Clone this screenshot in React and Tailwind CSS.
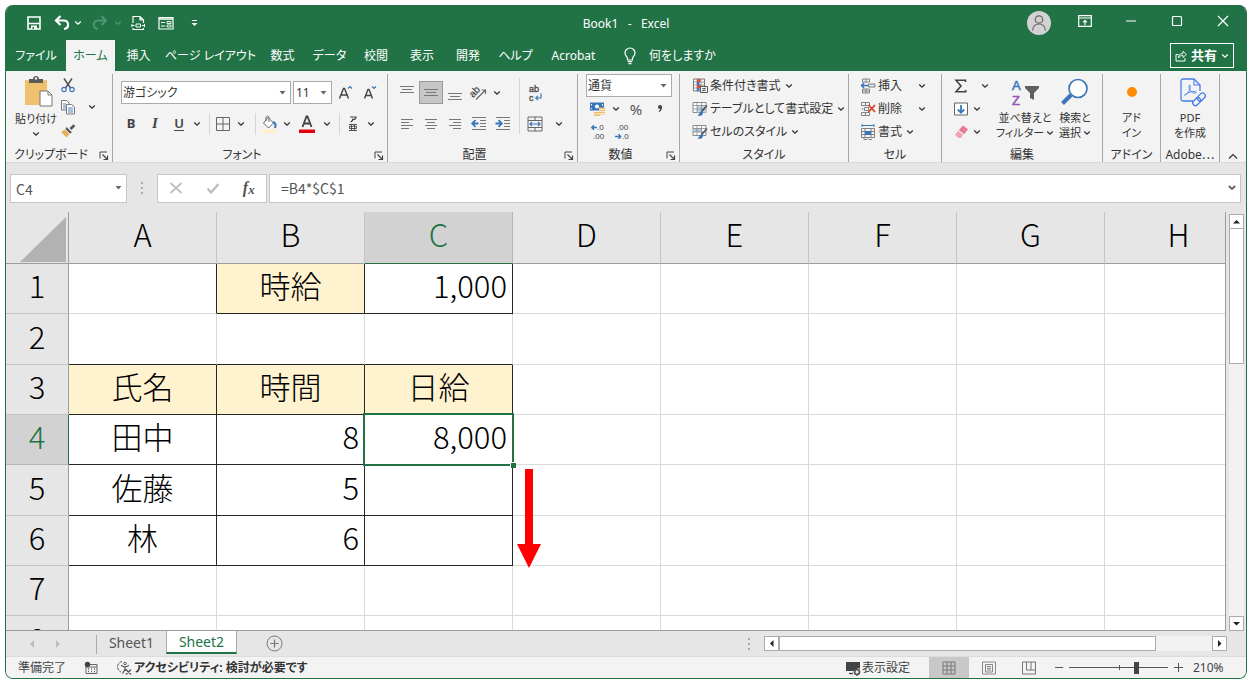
import React from "react";

const INK = "#444444";
const BLUE = "#3a76b8";
const GLYPH_FONT = "Liberation Sans";

function Svg({ w = 16, h = 16, children, className = "" }) {
  return (
    <svg
      width={w}
      height={h}
      viewBox={`0 0 ${w} ${h}`}
      fill="none"
      aria-hidden="true"
      className={`shrink-0 overflow-visible ${className}`}
    >
      {children}
    </svg>
  );
}

function Chevron({ className = "" }) {
  return (
    <Svg w={8} h={8} className={className}>
      <path d="M1.2 2.5 4 5.2 6.8 2.5" stroke="currentColor" strokeWidth="1.3" />
    </Svg>
  );
}

function Btn({ label, className = "", children }) {
  return (
    <button
      type="button"
      aria-label={label}
      className={`flex shrink-0 items-center justify-center ${className}`}
    >
      {children}
    </button>
  );
}

function Bar({ slot, height }) {
  return (
    <div className={`flex shrink-0 justify-center ${slot}`}>
      <div className={`w-px bg-[#d5d5d5] ${height}`} />
    </div>
  );
}

function Combo({ label, value, className, selectClass = "" }) {
  return (
    <div className={`relative shrink-0 border bg-white ${className}`}>
      <select
        aria-label={label}
        defaultValue={value}
        className={`h-full w-full appearance-none bg-transparent outline-none ${selectClass}`}
      >
        <option>{value}</option>
      </select>
      <Svg w={7} h={4} className="pointer-events-none absolute right-1 top-1/2 -translate-y-1/2">
        <path d="M.5 0h6l-3 3.5z" fill="#666" />
      </Svg>
    </div>
  );
}

/* ---------- Title bar ---------- */

function SaveIcon() {
  return (
    <Svg>
      <path d="M2 2h12v12H2z" stroke="#fff" strokeWidth="1.6" />
      <path d="M2.5 8.5h11" stroke="#fff" strokeWidth="1.4" />
      <path d="M5 10.5h6V14H5z" fill="#fff" />
      <path d="M6.5 12h1.5v2H6.5z" fill="#217346" />
    </Svg>
  );
}

function UndoIcon() {
  return (
    <Svg>
      <path d="M2 5.5h7.5c6 0 6 8 .5 8.500" stroke="#fff" strokeWidth="2.2" />
      <path d="M6.5 1 2 5.5 6.5 10" stroke="#fff" strokeWidth="2.2" />
    </Svg>
  );
}

function RedoIcon() {
  return (
    <Svg>
      <path d="M14 5.5H6.5c-6 0-6 8-.5 8.500" stroke="#4f9570" strokeWidth="2" />
      <path d="M9.5 1 14 5.5 9.5 10" stroke="#4f9570" strokeWidth="2" />
    </Svg>
  );
}

function TitleBar() {
  return (
    <header className="flex h-[35px] shrink-0 items-center bg-[#217346] pt-px text-white">
      <div className="flex flex-1 items-center">
        <Btn label="上書き保存" className="ml-4 w-6"><SaveIcon /></Btn>
        <Btn label="元に戻す" className="ml-1 w-6"><UndoIcon /></Btn>
        <Btn label="元に戻す一覧" className="w-2"><Chevron /></Btn>
        <Btn label="やり直し" className="ml-1.5 w-6"><RedoIcon /></Btn>
        <Btn label="やり直し一覧" className="w-3 text-[#4f9570]"><Chevron /></Btn>
        <Btn label="印刷プレビュー" className="w-7">
          <Svg>
            <path d="M3 8V1.500h7L13.500 5v3M10 1.500V5h3.500" stroke="#fff" strokeWidth="1.2" />
            <path d="M3 13v1.500h10.500V13" stroke="#fff" strokeWidth="1.2" />
            <path d="M2 9v3M14.500 9v3M1.500 10.500h3M12 10.500h3" stroke="#fff" strokeWidth="1" />
            <path d="M6 9h4.500v3H6z" stroke="#fff" />
          </Svg>
        </Btn>
        <Btn label="フォーム" className="w-7">
          <Svg>
            <path d="M1 2.500h14v11.500H1z" stroke="#fff" strokeWidth="1.2" />
            <path d="M1 4h14" stroke="#fff" strokeWidth="1.6" />
            <path d="M3 7.500h4M3 11h4" stroke="#fff" strokeWidth="1.2" />
            <path d="M9 6.500h4v2H9zM9 10h4v2H9z" stroke="#fff" strokeWidth=".9" />
          </Svg>
        </Btn>
        <Btn label="クイック アクセスのカスタマイズ" className="w-7">
          <Svg w={7} h={8}>
            <path d="M1 1.500h5" stroke="#fff" />
            <path d="M.5 4h6l-3 3z" fill="#fff" />
          </Svg>
        </Btn>
      </div>
      <h1 className="whitespace-pre pt-0.5 text-xs">Book1   -   Excel</h1>
      <div className="flex flex-1 items-center justify-end">
        <Btn label="アカウント" className="mr-[11px] size-6 rounded-full bg-[#d2d2d2]">
          <Svg w={18} h={18}>
            <circle cx="9" cy="5.500" r="3.700" stroke="#666" strokeWidth="1.2" />
            <path d="M2.500 16.500c.5-4.500 3-6.500 6.500-6.500s6 2 6.500 6.500" stroke="#666" strokeWidth="1.2" />
          </Svg>
        </Btn>
        <Btn label="リボンの表示オプション" className="w-[46px] pb-1">
          <Svg w={14} h={12}>
            <path d="M.7.7h12.600v10.600H.7zM.7 3h12.600" stroke="#fff" strokeWidth="1.2" />
            <path d="M7 10V5.500M5 7.300l2-2 2 2" stroke="#fff" strokeWidth="1.2" />
          </Svg>
        </Btn>
        <Btn label="最小化" className="w-[46px] pb-1">
          <Svg w={12} h={12}><path d="M1 6h10" stroke="#fff" strokeWidth="1.2" /></Svg>
        </Btn>
        <Btn label="最大化" className="w-[46px] pb-1">
          <Svg w={12} h={12}><rect x="1.500" y="1.500" width="9" height="9" rx="1" stroke="#fff" strokeWidth="1.2" /></Svg>
        </Btn>
        <Btn label="閉じる" className="w-[46px] pb-1">
          <Svg w={12} h={12}><path d="m1 1 10 10m0-10L1 11" stroke="#fff" strokeWidth="1.2" /></Svg>
        </Btn>
      </div>
    </header>
  );
}

const TABS = [
  ["ファイル", "w-[60px]"],
  ["ホーム", "w-[49px] bg-[#f3f3f3] text-[#217346]"],
  ["挿入", "w-[47px]"],
  ["ページ レイアウト", "w-[97px]"],
  ["数式", "w-[47px]"],
  ["データ", "w-[47px]"],
  ["校閲", "w-[46px]"],
  ["表示", "w-[46px]"],
  ["開発", "w-[46px]"],
  ["ヘルプ", "w-[49px]"],
  ["Acrobat", "w-[67px]"],
];

function TabStrip() {
  return (
    <nav className="flex h-[31px] shrink-0 bg-[#217346] text-xs text-white">
      {TABS.map(([name, cls]) => (
        <button key={name} type="button" className={`h-full shrink-0 whitespace-nowrap ${cls}`}>
          {name}
        </button>
      ))}
      <button type="button" className="flex shrink-0 items-center gap-3 pl-4">
        <Svg w={14} h={18}>
          <path d="M4.500 13v-1.500C4.500 9.500 2 9 2 6a5 5 0 0 1 10 0c0 3-2.500 3.500-2.500 5.500V13z" stroke="#fff" strokeWidth="1.2" />
          <path d="M4.800 14.700h4.400M5.500 16.600h3" stroke="#fff" strokeWidth="1.2" />
        </Svg>
        何をしますか
      </button>
      <div className="flex flex-1 items-center justify-end pr-3">
        <button type="button" className="flex h-[25px] w-16 items-center justify-center gap-1 border border-white font-bold">
          <Svg w={12} h={12}>
            <path d="M3.500 4.500H1v6.500h9V8" stroke="#fff" />
            <path d="M3.500 8c0-3 1.500-4.500 4.500-4.500V1.200L11.300 4.500 8 7.500V5.500C6 5.500 4.500 6 3.500 8z" stroke="#fff" strokeWidth=".9" />
          </Svg>
          <span className="text-[13px]">共有</span>
          <Chevron />
        </button>
      </div>
    </nav>
  );
}

/* ---------- Ribbon ---------- */

function Group({ label, launcher, className, labelClass = "", children }) {
  return (
    <section
      aria-label={label}
      className={`flex shrink-0 flex-col border-r border-[#a8a8a8] ${className}`}
    >
      <div className="h-[74px]">{children}</div>
      <div className="flex h-[14px] items-center">
        <div className={`flex-1 whitespace-nowrap text-center leading-[14px] ${labelClass}`}>{label}</div>
        {launcher && (
          <Btn label={`${label}の設定`} className="w-4">
            <Svg w={10} h={10} className="mt-0.5">
              <path d="M1 7.500V1h7" stroke={INK} />
              <path d="M3.500 3.500 8.500 8.500M8.500 4.500v4h-4" stroke={INK} strokeWidth="1.2" />
            </Svg>
          </Btn>
        )}
      </div>
    </section>
  );
}

function Clipboard() {
  return (
    <Group label="クリップボード" launcher className="w-[107px]">
      <div className="flex">
        <button type="button" className="flex w-[54px] flex-col items-center pl-1.5 text-[11px]">
          <Svg w={30} h={34} className="ml-1">
            <path d="M2 6h22v25H2z" fill="#efc06e" />
            <path d="M6 5h4c0-4 6-4 6 0h4v4H6z" fill="#5a5a5a" />
            <circle cx="13" cy="4.500" r="1.200" fill="#f3f3f3" />
            <path d="M17 17h8l4 4v11H17z" fill="#fff" stroke="#777" />
            <path d="M25 17v4h4" stroke="#777" />
          </Svg>
          <span className="mt-1 whitespace-nowrap leading-[14px]">貼り付け</span>
          <Chevron className="mt-1" />
        </button>
        <div className="flex flex-col">
          <Btn label="切り取り" className="h-[22px] w-4">
            <Svg>
              <path d="M4 1.500 10.500 11M12 1.500 5.500 11" stroke="#555" strokeWidth="1.5" />
              <circle cx="4" cy="12.500" r="2.200" stroke={BLUE} strokeWidth="1.2" />
              <circle cx="12" cy="12.500" r="2.200" stroke={BLUE} strokeWidth="1.2" />
            </Svg>
          </Btn>
          <div className="flex">
            <Btn label="コピー" className="h-[22px] w-4">
              <Svg>
                <path d="M1.500 1.500h5l2.500 2.500v7H1.500z" fill="#fff" stroke="#777" />
                <path d="M6.500 5.500h5l3 2.500v7h-8z" fill="#fff" stroke="#777" />
                <path d="M3 5h3M3 7h3M3 9h3M8 9h5M8 11h5M8 13h5" stroke={BLUE} strokeWidth=".9" />
              </Svg>
            </Btn>
            <Btn label="コピー オプション" className="w-8"><Chevron /></Btn>
          </div>
          <Btn label="書式のコピー" className="h-[24px] w-4">
            <Svg>
              <path d="m9.500 6 4-3.800 1.800 1.800L11.500 8z" fill="#555" />
              <path d="m6.500 5 5.500 5.500-2 1L5.500 7z" fill="#555" />
              <path d="m5 7.500 4.500 4.500-3 3.500L1 10z" fill="#e8b15e" />
            </Svg>
          </Btn>
        </div>
      </div>
    </Group>
  );
}

function FontGroup() {
  return (
    <Group label="フォント" launcher className="w-[275px]">
      <div className="flex h-[37px] items-center pl-2">
        <Combo label="フォント名" value="游ゴシック" className="h-[23px] w-[170px] border-[#ababab]" selectClass="pl-px" />
        <Combo label="フォント サイズ" value="11" className="ml-0.5 h-[23px] w-[39px] border-[#ababab]" selectClass="pl-0.5" />
        <Btn label="フォント サイズの拡大" className="w-7">
          <Svg>
            <path d="m1.500 13.500 4-10h1l4 10M3 10h6" stroke={INK} strokeWidth="1.4" />
            <path d="m10 3.500 2-2 2 2" stroke={BLUE} strokeWidth="1.2" />
          </Svg>
        </Btn>
        <Btn label="フォント サイズの縮小" className="w-5">
          <Svg>
            <path d="m2.500 13.500 3.500-9h1l3.500 9M4 10.500h5" stroke={INK} strokeWidth="1.4" />
            <path d="m10 1.500 2 2 2-2" stroke={BLUE} strokeWidth="1.2" />
          </Svg>
        </Btn>
      </div>
      <div className="flex h-[26px] items-center pl-[6px]">
        <Btn label="太字" className="w-6 text-[13px] font-bold text-[#444]">B</Btn>
        <Btn label="斜体" className="w-6 font-[Liberation_Serif] text-[15px] font-bold italic text-[#444]">I</Btn>
        <Btn label="下線" className="w-6 text-[13px] font-semibold text-[#444] underline underline-offset-2">U</Btn>
        <Btn label="下線の種類" className="w-3"><Chevron /></Btn>
        <Bar slot="w-3" height="h-[22px]" />
        <Btn label="罫線" className="w-4">
          <Svg>
            <path d="M1.500 1.500h13v13h-13zM8 1.500v13M1.500 8h13" stroke="#666" />
          </Svg>
        </Btn>
        <Btn label="罫線の種類" className="w-5"><Chevron /></Btn>
        <Bar slot="w-2" height="h-[22px]" />
        <Btn label="塗りつぶしの色" className="w-5">
          <Svg w={17} h={18}>
            <path d="m7 2.500 5.500 5.500-5 5L2.500 8z" fill="#fff" stroke="#666" />
            <path d="M5 6V3c0-2.500 3-2.500 3 0v4" stroke="#666" />
            <path d="M12 7c3 1 3 3 2 6" stroke={BLUE} strokeWidth="2" />
            <path d="M1 14.500h14V18H1z" fill="#fff0c8" />
          </Svg>
        </Btn>
        <Btn label="塗りつぶしの色一覧" className="w-4"><Chevron /></Btn>
        <Btn label="フォントの色" className="w-6">
          <Svg w={18} h={18}>
            <path d="m4.500 12 4-10.500h1l4 10.500M6 8.500h6" stroke={INK} strokeWidth="1.8" />
            <path d="M1 14.500h16V18H1z" fill="#e3000f" />
          </Svg>
        </Btn>
        <Btn label="フォントの色一覧" className="w-4"><Chevron /></Btn>
        <Bar slot="w-2" height="h-[22px]" />
        <Btn label="ふりがな" className="w-5">
          <Svg>
            <path d="M5 1h6c0 2-1.500 2.500-2.500 2.500M8 2.500C8 4.500 7 5.500 5.500 6" stroke={INK} strokeWidth="1.2" />
            <path d="M4 8.500h8M4 14.500h8M6.500 8.500v6M9.500 8.500v6M4.500 10.300h7v2.200h-7z" stroke={INK} strokeWidth=".9" />
          </Svg>
        </Btn>
        <Btn label="ふりがなの設定" className="w-4"><Chevron /></Btn>
      </div>
    </Group>
  );
}

function Lines({ d }) {
  return (
    <Svg>
      <path d={d} stroke="#777" />
    </Svg>
  );
}

function Alignment() {
  return (
    <Group label="配置" launcher className="w-[190px]">
      <div className="flex h-16 pl-[7px]">
        <div>
          <div className="flex h-[37px] items-center">
            <Btn label="上揃え" className="w-6"><Lines d="M1 1.500h14M3 4.500h10M1 7.500h14" /></Btn>
            <Btn label="上下中央揃え" className="h-[23px] w-6 border border-[#9a9a9a] bg-[#c6c6c6]">
              <Lines d="M1 4.500h14M3 7.500h10M1 10.500h14" />
            </Btn>
            <Btn label="下揃え" className="w-6"><Lines d="M1 8.500h14M3 11.500h10M1 14.500h14" /></Btn>
            <Btn label="方向" className="w-6">
              <Svg>
                <text x="-1" y="10" fontSize="10" fontFamily={GLYPH_FONT} fill={INK} stroke={INK} strokeWidth=".2" transform="rotate(-45 4 8)">ab</text>
                <path d="m5 14.500 9.500-9.500M14.500 9V5h-4" stroke="#666" strokeWidth="1.2" />
              </Svg>
            </Btn>
            <Btn label="方向一覧" className="w-3"><Chevron /></Btn>
          </div>
          <div className="flex h-[26px] items-center">
            <Btn label="左揃え" className="w-6"><Lines d="M2 3.500h12M2 6.500h8M2 9.500h12M2 12.500h8" /></Btn>
            <Btn label="中央揃え" className="w-6"><Lines d="M2 3.500h12M4 6.500h8M2 9.500h12M4 12.500h8" /></Btn>
            <Btn label="右揃え" className="w-6"><Lines d="M2 3.500h12M6 6.500h8M2 9.500h12M6 12.500h8" /></Btn>
            <Btn label="インデントを減らす" className="w-6">
              <Svg>
                <path d="M1 1.500h14M9 4.500h6M9 7.500h6M9 10.500h6M1 13.500h14" stroke="#777" />
                <path d="M7.500 7.500H1.500M4.500 4.200 1.200 7.500l3.300 3.300" stroke={BLUE} strokeWidth="1.8" />
              </Svg>
            </Btn>
            <Btn label="インデントを増やす" className="w-6">
              <Svg>
                <path d="M1 1.500h14M9 4.500h6M9 7.500h6M9 10.500h6M1 13.500h14" stroke="#777" />
                <path d="M.5 7.500h6M3.500 4.200l3.300 3.300-3.300 3.300" stroke={BLUE} strokeWidth="1.8" />
              </Svg>
            </Btn>
          </div>
        </div>
        <Bar slot="w-2 items-center" height="h-14" />
        <div>
          <div className="flex h-[37px] items-center">
            <Btn label="折り返して全体を表示する" className="w-6">
              <Svg h={18}>
                <text x="2" y="8" fontSize="9" fontFamily={GLYPH_FONT} fill={INK} stroke={INK} strokeWidth=".3">ab</text>
                <text x="2" y="17" fontSize="9" fontFamily={GLYPH_FONT} fill={INK} stroke={INK} strokeWidth=".3">c</text>
                <path d="M14 9.500V14H9M11 11.800 8.800 14l2.200 2.200" stroke={BLUE} strokeWidth="1.2" />
              </Svg>
            </Btn>
          </div>
          <div className="flex h-[26px] items-center">
            <Btn label="セルを結合して中央揃え" className="w-6">
              <Svg>
                <path d="M1 1h14v14H1zM1 4.500h14M1 11.500h14M8 1v3.500M8 11.500V15" stroke="#666" />
                <path d="M3 8h10M5 6 3 8l2 2M11 6l2 2-2 2" stroke={BLUE} strokeWidth="1.2" />
              </Svg>
            </Btn>
            <Btn label="セルの結合一覧" className="w-6"><Chevron /></Btn>
          </div>
        </div>
      </div>
    </Group>
  );
}

function NumberGroup() {
  return (
    <Group label="数値" launcher className="w-[102px]">
      <div className="pb-px pl-2">
        <Combo label="表示形式" value="通貨" className="h-[23px] w-[86px] border-[#ababab]" selectClass="pl-px" />
      </div>
      <div className="flex h-[22px] items-center pl-2">
        <Btn label="通貨表示形式" className="w-6">
          <Svg w={18} h={16}>
            <path d="M1 1.500h14v8H1z" fill={BLUE} />
            <circle cx="8" cy="5.500" r="2" fill="#fff" />
            <path d="M2.500 3v1.500M13.500 3v1.500M2.500 7v1" stroke="#fff" />
            <path d="M10 6.500h6v7h-6zM5 11h6v4H5z" fill="#eebd66" />
            <path d="M10 8.500h6M10 10.500h6M10 12.500h6M5 13h6" stroke="#fff" strokeWidth=".7" />
          </Svg>
        </Btn>
        <Btn label="通貨一覧" className="w-3"><Chevron /></Btn>
        <Btn label="パーセント スタイル" className="w-7 text-[15px] text-[#555]">%</Btn>
        <Btn label="桁区切りスタイル" className="w-5">
          <Svg w={8} h={12}>
            <circle cx="4" cy="4" r="2" fill={INK} />
            <path d="M5.200 3.500c.5 2.500-.5 4-2.400 5" stroke={INK} strokeWidth="1.4" />
          </Svg>
        </Btn>
      </div>
      <div className="flex h-6 items-center pl-2">
        <Btn label="小数点以下の表示桁数を増やす" className="w-6">
          <Svg>
            <text x="7" y="6" fontSize="8" fontFamily={GLYPH_FONT} fill={INK}>.0</text>
            <text x="3" y="15" fontSize="8" fontFamily={GLYPH_FONT} fill={INK}>.00</text>
            <path d="M7 3.500H2M4 1.300 1.800 3.500 4 5.700" stroke={BLUE} strokeWidth="1.5" />
          </Svg>
        </Btn>
        <Btn label="小数点以下の表示桁数を減らす" className="w-6">
          <Svg>
            <text x="3" y="6" fontSize="8" fontFamily={GLYPH_FONT} fill={INK}>.00</text>
            <text x="8" y="15" fontSize="8" fontFamily={GLYPH_FONT} fill={INK}>.0</text>
            <path d="M1 12.500h5.500M4.500 10.300 6.700 12.500l-2.200 2.200" stroke={BLUE} strokeWidth="1.5" />
          </Svg>
        </Btn>
      </div>
    </Group>
  );
}

function RowButton({ icon, text, wide }) {
  return (
    <button type="button" className="flex h-[23px] items-center whitespace-nowrap">
      {icon}
      <span className="ml-0.5">{text}</span>
      <Chevron className={wide ? "ml-4" : "ml-1"} />
    </button>
  );
}

function TableBrush({ fill }) {
  return (
    <Svg>
      <path d="M1 1.500h13v10H1z" fill="#fff" stroke="#888" />
      {fill}
      <path d="M1 4.500h13M1 8h13M5 1.500v10M9.500 1.500v10" stroke="#888" strokeWidth=".8" />
      <path d="m15.500 5-5 6-1.500-1.200L14.500 4z" fill="#555" />
      <path d="M9.500 10c1.800.5 2 2.500.5 4-1 1-3 1-4.500.7C7.500 13.500 7 11 9.500 10z" fill={BLUE} />
    </Svg>
  );
}

function Styles() {
  return (
    <Group label="スタイル" className="w-[169px]">
      <div className="flex flex-col items-start pl-3">
        <RowButton
          text="条件付き書式"
          icon={
            <Svg>
              <path d="M1.500 1h11v12h-11z" fill="#fff" stroke="#777" />
              <path d="M1.500 4h11M1.500 7h11M1.500 10h11M5 1v12M9 1v12" stroke="#888" strokeWidth=".8" />
              <path d="M5 1h3.500v3H5zM5 7h4v3H5z" fill="#d9533c" />
              <path d="M5 4h2.500v3H5zM5 10h2.500v3H5z" fill={BLUE} />
              <path d="M8.500 8.500h7v6h-7z" fill="#fff" stroke="#555" />
              <path d="M10 10.500h4M10 12.500h4M13 9.500l-2 4" stroke="#555" strokeWidth=".8" />
            </Svg>
          }
        />
        <RowButton
          text="テーブルとして書式設定"
          icon={<TableBrush fill={<path d="M5 4.500h9v7H5z" fill="#bcd3ea" />} />}
        />
        <RowButton
          text="セルのスタイル"
          icon={<TableBrush fill={<path d="M1.500 4.500h8V8h-8z" fill="#a9c8e6" />} />}
        />
      </div>
    </Group>
  );
}

function Cells() {
  return (
    <Group label="セル" className="w-[93px]">
      <div className="flex flex-col items-start pl-[11px]">
        <RowButton
          wide
          text="挿入"
          icon={
            <Svg>
              <path d="M2.500 1h7v3h-7zM6 1v3M2.500 11h7v4h-7zM6 11v4M2.500 13h7" stroke="#777" strokeWidth=".9" />
              <path d="M8.500 6h6.500v3H8.500z" fill="#d5e4f3" stroke="#777" strokeWidth=".9" />
              <path d="M8 7.500H1.500M4 5 1.500 7.500 4 10" stroke={BLUE} strokeWidth="1.5" />
            </Svg>
          }
        />
        <RowButton
          wide
          text="削除"
          icon={
            <Svg>
              <path d="M1.500 1.500h8v3h-8zM5.500 1.500v3M1.500 11.500h8v3h-8zM5.500 11.500v3M4.500 6.500h4v3h-4zM1.500 8h2" stroke="#777" strokeWidth=".9" />
              <path d="m8.500 4 6.500 7M15 4l-6.500 7" stroke="#d83b1e" strokeWidth="1.7" />
            </Svg>
          }
        />
        <RowButton
          text="書式"
          icon={
            <Svg>
              <path d="M2 1.500h12M2 0v3M14 0v3" stroke={BLUE} />
              <path d="M1.500 4.500h13v9h-13zM1.500 7.500h13M1.500 10.500h13M5 4.500v9M11 4.500v9" stroke="#777" strokeWidth=".9" />
              <path d="M5 7h6v4H5z" fill={BLUE} />
              <path d="M4 13.500v2h3l1-1 1 1h3" stroke="#777" strokeWidth=".9" />
            </Svg>
          }
        />
      </div>
    </Group>
  );
}

function BigButton({ icon, lines, chevron, className }) {
  return (
    <button type="button" className={`flex shrink-0 flex-col items-center text-[11px] ${className}`}>
      <span className="flex h-9 items-center justify-center">{icon}</span>
      <span className="whitespace-nowrap leading-[15px]">{lines[0]}</span>
      <span className="flex items-center gap-0.5 whitespace-nowrap leading-[15px]">
        {lines[1]}
        {chevron && <Chevron />}
      </span>
    </button>
  );
}

function Editing() {
  return (
    <Group label="編集" className="w-[161px]">
      <div className="flex">
        <div className="flex w-[54px] flex-col pl-[11px]">
          <div className="flex h-[23px] items-center">
            <Svg><path d="M12.500 4V2.200H3L8 8l-5 5.800h9.700V12" stroke={INK} strokeWidth="1.6" /></Svg>
            <Btn label="オート SUM" className="ml-3"><Chevron /></Btn>
          </div>
          <div className="flex h-[23px] items-center">
            <Svg>
              <path d="M1.500 2h13v12h-13z" fill="#fff" stroke="#666" />
              <path d="M8 4v7.500M4.800 8.500 8 11.700l3.200-3.200" stroke={BLUE} strokeWidth="1.8" />
            </Svg>
            <Btn label="フィル" className="ml-1"><Chevron /></Btn>
          </div>
          <div className="flex h-[23px] items-center">
            <Svg>
              <path d="m10 1.500 5 3.800-4 5-5.200-4.300z" fill="#e57a92" />
              <path d="m5 6.800 5 4.200-2.200 3H5.500L2 11z" fill="#f0a3b3" />
            </Svg>
            <Btn label="クリア" className="ml-1"><Chevron /></Btn>
          </div>
        </div>
        <BigButton
          className="w-[58px]"
          lines={["並べ替えと", "フィルター"]}
          chevron
          icon={
            <Svg w={30} h={28}>
              <text x="2" y="12" fontSize="13" fontFamily={GLYPH_FONT} fill={BLUE} stroke={BLUE} strokeWidth=".5">A</text>
              <text x="2" y="27" fontSize="13" fontFamily={GLYPH_FONT} fill="#9257b5" stroke="#9257b5" strokeWidth=".5">Z</text>
              <path d="M15 8h14v2l-5 5v7l-4-2v-5l-5-5z" fill="#5f5f5f" />
            </Svg>
          }
        />
        <BigButton
          className="w-[42px]"
          lines={["検索と", "選択"]}
          chevron
          icon={
            <Svg w={30} h={28}>
              <path d="m11 17-8.500 8.500" stroke={BLUE} strokeWidth="4" />
              <circle cx="18" cy="10.500" r="9" fill="#fff" stroke={BLUE} strokeWidth="1.7" />
            </Svg>
          }
        />
      </div>
    </Group>
  );
}

function Ribbon() {
  return (
    <div className="flex h-[92px] shrink-0 border-b border-[#d9d9d9] bg-[#f3f3f3] pt-[3px] text-xs text-[#333]">
      <Clipboard />
      <FontGroup />
      <Alignment />
      <NumberGroup />
      <Styles />
      <Cells />
      <Editing />
      <Group label="アドイン" className="w-[58px]">
        <BigButton
          className="w-full"
          lines={["アド", "イン"]}
          icon={<Svg w={12} h={12}><circle cx="6" cy="6" r="5" fill="#ff8c00" /></Svg>}
        />
      </Group>
      <Group label="Adobe⋯" className="w-[59px]">
        <BigButton
          className="w-full"
          lines={["PDF", "を作成"]}
          icon={
            <Svg w={28} h={30} className="ml-1.5">
              <path d="M14 24H4a2 2 0 0 1-2-2V4a2 2 0 0 1 2-2h11l6 6v6" stroke="#4a7be8" strokeWidth="1.3" />
              <path d="M15 2v6h6" stroke="#4a7be8" strokeWidth="1.1" />
              <path d="M6 18c4-2 6-7 5-9.500-.8-1.500-1.800.5-.5 3.500 1.500 3.500 4 4.500 6 4s0-2-3-1.500c-3 .5-5 1.500-7 3-1 1-1.500.8-.5.5z" stroke="#4a7be8" strokeWidth=".9" />
              <g stroke="#4a7be8" strokeWidth="1.3" transform="rotate(-45 20 22)">
                <rect x="12" y="19.500" width="9" height="5.500" rx="2.750" />
                <rect x="18.500" y="19.500" width="9" height="5.500" rx="2.750" />
              </g>
            </Svg>
          }
        />
      </Group>
      <div className="flex flex-1 items-end justify-center">
        <Btn label="リボンを折りたたむ" className="pb-0.5">
          <Svg w={10} h={7}><path d="m1 5.500 4-4 4 4" stroke="#333" strokeWidth="1.2" /></Svg>
        </Btn>
      </div>
    </div>
  );
}

/* ---------- Formula bar ---------- */

function Dots() {
  return (
    <Svg w={3} h={12}>
      <path d="M0 0h2v2H0zM0 5h2v2H0zM0 10h2v2H0z" fill="#ababab" />
    </Svg>
  );
}

function FormulaBar() {
  return (
    <div className="flex h-[49px] shrink-0 items-center pl-1 pr-[5px] pt-px text-[#555] [font-feature-settings:normal]">
      <Combo
        label="名前ボックス"
        value="C4"
        className="h-[29px] w-[117px] border-[#c6c6c6]"
        selectClass="pl-[5px] pt-0.5 font-['Noto_Sans_CJK_JP',sans-serif] text-sm"
      />
      <div className="flex w-[30px] justify-center"><Dots /></div>
      <div className="flex h-[29px] w-[110px] shrink-0 items-center justify-around border border-[#c6c6c6] bg-white">
        <Btn label="キャンセル">
          <Svg w={14} h={14}><path d="m1.500 2 11 10M12.500 2l-11 10" stroke="#bdbdbd" strokeWidth="1.7" /></Svg>
        </Btn>
        <Btn label="入力">
          <Svg w={14} h={14}><path d="m1.500 7.500 3.500 4L12.500 3" stroke="#bdbdbd" strokeWidth="2.2" /></Svg>
        </Btn>
        <Btn label="関数の挿入" className="font-[Liberation_Serif] text-base font-bold italic">
          f<span className="pt-1 text-[13px]">x</span>
        </Btn>
      </div>
      <div className="ml-[2px] flex h-[29px] flex-1 items-center border border-[#c6c6c6] bg-white">
        <input
          aria-label="数式バー"
          defaultValue="=B4*$C$1"
          className="h-full min-w-0 flex-1 bg-transparent pl-[11px] font-['Noto_Sans_CJK_JP',sans-serif] text-sm text-[#555] outline-none"
        />
        <Btn label="数式バーの展開" className="mr-1">
          <Svg w={8} h={6}><path d="m.8 1 3.200 3L7.200 1" stroke="#666" strokeWidth="2" /></Svg>
        </Btn>
      </div>
    </div>
  );
}

/* ---------- Sheet ---------- */

const COLS = ["A", "B", "C", "D", "E", "F", "G", "H", "I", "J", "K", "L", "M"];
const ROWS = [1, 2, 3, 4, 5, 6, 7, 8, 9, 10, 11, 12, 13, 14];
const DATA = {
  B1: "時給", C1: "1,000",
  A3: "氏名", B3: "時間", C3: "日給",
  A4: "田中", B4: "8", C4: "8,000",
  A5: "佐藤", B5: "5",
  A6: "林", B6: "6",
};
const HEADER_CELLS = ["B1", "A3", "B3", "C3"];
const RIGHT_LINE = ["A1", "B1", "C1"];
const BOTTOM_LINE = ["B1", "C1", "A2", "B2", "C2"];

function cellClass(col, row) {
  const id = col + row;
  const inTable = row >= 3 && row <= 6 && "ABC".includes(col);
  const right = inTable || RIGHT_LINE.includes(id) ? "border-r-[#262626]" : "border-r-[#d9d9d9]";
  const bottom = inTable || BOTTOM_LINE.includes(id) ? "border-b-[#262626]" : "border-b-[#d9d9d9]";
  const fill = HEADER_CELLS.includes(id) ? "bg-[#fff2cf]" : "bg-white";
  const align = /^[0-9]/.test(DATA[id] || "") ? "pr-[5px] text-right" : "text-center";
  return `relative border-b border-r pb-2 ${right} ${bottom} ${fill} ${align}`;
}

function Arrow() {
  return (
    <Svg w={24} h={100} className="absolute left-[152px] top-1 z-10">
      <path d="M8 0h8v75h8L12 99 0 75h8z" fill="#ff0000" />
    </Svg>
  );
}

function Sheet() {
  return (
    <div className="min-w-0 flex-1 overflow-hidden border-b border-r border-[#9c9c9c]">
      <table className="w-max table-fixed border-separate border-spacing-0 font-['Noto_Sans_CJK_JP',sans-serif] text-[31px] font-light leading-[41px] text-black [font-feature-settings:normal]">
        <thead>
          <tr className="h-[52px]">
            <th className="w-[63px] border-b border-r border-[#9c9c9c] p-0">
              <Svg w={46} h={45} className="ml-auto mr-0.5 mt-1">
                <path d="M46 0v45H0z" fill="#b2b2b2" />
              </Svg>
            </th>
            {COLS.map((c) => (
              <th
                key={c}
                scope="col"
                className={
                  c === "C"
                    ? "w-[148px] border-b border-r border-b-[#217346] border-r-[#b5b5b5] bg-[#d2d2d2] pb-2 font-light text-[#217346]"
                    : "w-[148px] border-b border-r border-b-[#9c9c9c] border-r-[#c4c4c4] pb-2 font-light"
                }
              >
                {c}
              </th>
            ))}
          </tr>
        </thead>
        <tbody>
          {ROWS.map((r) => (
            <tr key={r} className={r % 3 === 2 ? "h-[51px]" : "h-[50px]"}>
              <th
                scope="row"
                className={
                  r === 4
                    ? "border-b border-r border-b-[#b5b5b5] border-r-[#217346] bg-[#d2d2d2] pb-2 font-light text-[#217346]"
                    : "border-b border-r border-b-[#c4c4c4] border-r-[#9c9c9c] pb-2 font-light"
                }
              >
                {r}
              </th>
              {COLS.map((c) => (
                <td key={c} className={cellClass(c, r)}>
                  {DATA[c + r]}
                  {c + r === "C4" && (
                    <div className="absolute -inset-x-0.5 -bottom-0.5 -top-0.5 z-10 border-2 border-[#217346]">
                      <div className="absolute -bottom-1 -right-1 size-[6px] border-l border-t border-white bg-[#217346]" />
                    </div>
                  )}
                  {c + r === "C5" && <Arrow />}
                </td>
              ))}
            </tr>
          ))}
        </tbody>
      </table>
    </div>
  );
}

function ScrollButton({ label, d }) {
  return (
    <Btn label={label} className="size-[15px] border border-[#ababab] bg-white">
      <Svg w={9} h={9}><path d={d} fill="#222" /></Svg>
    </Btn>
  );
}

function VerticalScroll() {
  return (
    <div className="flex w-5 shrink-0 flex-col pl-[3px] pt-0.5">
      <ScrollButton label="上へスクロール" d="M1 6.500h7L4.500 3z" />
      <div className="w-[15px] flex-1 bg-[#f1f1f1]">
        <div className="h-[35%] border border-t-0 border-[#ababab] bg-white" />
      </div>
      <ScrollButton label="下へスクロール" d="M1 3h7L4.500 6.500z" />
    </div>
  );
}

function SheetTabs() {
  return (
    <div className="flex h-[25px] shrink-0 text-sm text-[#555]">
      <Btn label="前のシート" className="w-[52px]"><Svg w={6} h={8}><path d="M5 0v8L1 4z" fill="#bdbdbd" /></Svg></Btn>
      <Btn label="次のシート" className="w-0"><Svg w={6} h={8}><path d="M1 0v8l4-4z" fill="#bdbdbd" /></Svg></Btn>
      <div className="ml-[38px] mt-1 h-[19px] w-px shrink-0 bg-[#ababab]" />
      <button type="button" className="h-[23px] w-[69px] shrink-0">Sheet1</button>
      <button type="button" className="h-[23px] w-[71px] shrink-0 border-x border-b-2 border-x-[#ababab] border-b-[#217346] bg-white text-[#217346]">
        Sheet2
      </button>
      <Btn label="新しいシート" className="ml-[29px]">
        <Svg w={17} h={17}>
          <circle cx="8.500" cy="8.500" r="7.500" stroke="#777" />
          <path d="M8.500 4.500v8M4.500 8.500h8" stroke="#777" strokeWidth="1.2" />
        </Svg>
      </Btn>
      <div className="flex flex-1 items-center justify-end pr-[19px]">
        <Dots />
        <div className="ml-[13px] flex w-[463px] bg-[#f1f1f1]">
          <ScrollButton label="左へスクロール" d="M6.500 1v7L3 4.500z" />
          <div className="flex-1">
            <div className="h-[15px] w-[87%] border border-[#ababab] bg-white" />
          </div>
          <ScrollButton label="右へスクロール" d="M3 1v7l3.500-3.500z" />
        </div>
      </div>
    </div>
  );
}

function StatusBar() {
  return (
    <footer className="flex h-[22px] shrink-0 items-center border-t border-[#dcdcdc] bg-[#f3f3f3] pl-3 text-xs text-[#444]">
      <span>準備完了</span>
      <Btn label="マクロの記録" className="ml-[18px]">
        <Svg w={14} h={14}>
          <path d="M2 3.500h11v9H2zM2 6h11" stroke="#666" />
          <path d="M4 8h1M7 8h1M10 8h1M4 10.500h1M7 10.500h1M10 10.500h1" stroke="#666" strokeWidth="1.4" />
          <circle cx="3.500" cy="3.500" r="2.700" fill="#444" />
        </Svg>
      </Btn>
      <button type="button" className="ml-[18px] flex items-center gap-0.5 whitespace-nowrap font-bold text-[#333]">
        <Svg>
          <path d="M6 1.500a5.500 5.500 0 0 0-1 10.500" stroke="#555" strokeDasharray="3 1" />
          <circle cx="9" cy="3.500" r="1.200" stroke="#555" />
          <path d="M5 5.500 9 7l4-1.500M9 7v2.500l-2.500 4M9 9.500l1 1M10 9.500l5 5M15 9.500l-5 5" stroke="#555" strokeWidth="1.3" />
        </Svg>
        アクセシビリティ: 検討が必要です
      </button>
      <div className="flex h-full flex-1 items-center justify-end">
        <button type="button" className="mr-[19px] flex items-center gap-px">
          <Svg>
            <path d="M1 2h14v7l-2-1-3 2-2 1H1z" fill="#444" />
            <path d="M4 13.500h4" stroke="#444" strokeWidth="1.4" />
            <circle cx="12" cy="12" r="2.300" stroke="#444" strokeWidth="1.3" />
            <path d="M12 8v1.500M12 14.500V16M8.500 12H10M14 12h1.500M9.500 9.500l1 1M13.500 13.500l1 1M14.500 9.500l-1 1M10.500 13.500l-1 1" stroke="#444" strokeWidth="1.2" />
          </Svg>
          表示設定
        </button>
        <Btn label="標準" className="h-full w-10 bg-[#c8c8c8]">
          <Svg w={14} h={14}><path d="M1 1h12v12H1zM5 1v12M9 1v12M1 5h12M1 9h12" stroke="#777" /></Svg>
        </Btn>
        <Btn label="ページ レイアウト" className="w-10">
          <Svg w={14} h={14}><path d="M.5 1h13v12H.5zM3.500 3.500h7v7.500h-7zM5 5.500h4M5 7.300h4M5 9h4" stroke="#888" /></Svg>
        </Btn>
        <Btn label="改ページ プレビュー" className="w-10">
          <Svg w={14} h={14}><path d="M.5 1h13v12H.5zM4.500 1v8h4.500V1M9 9h4.500" stroke="#777" /></Svg>
        </Btn>
        <Btn label="縮小" className="w-5"><Svg w={9} h={9}><path d="M0 4.500h8" stroke="#555" /></Svg></Btn>
        <div className="relative flex w-[99px] items-center">
          <div className="absolute left-1/2 h-[5px] w-px bg-[#555]" />
          <input
            type="range"
            aria-label="ズーム"
            min="0"
            max="100"
            defaultValue="69"
            className="h-3 w-full appearance-none bg-[linear-gradient(#555,#555)] bg-[length:100%_1px] bg-center bg-no-repeat [&::-webkit-slider-thumb]:h-3 [&::-webkit-slider-thumb]:w-[5px] [&::-webkit-slider-thumb]:appearance-none [&::-webkit-slider-thumb]:bg-[#444]"
          />
        </div>
        <Btn label="拡大" className="w-5"><Svg w={9} h={9}><path d="M0 4.500h9M4.500 0v9" stroke="#555" /></Svg></Btn>
        <span className="w-[58px] pl-[5px]">210%</span>
      </div>
    </footer>
  );
}

export default function App() {
  return (
    <div className="h-screen bg-white pb-1 pl-[5px] pr-1 pt-[5px] font-['Noto_Sans','Noto_Sans_CJK_JP',sans-serif] [font-feature-settings:'palt']">
      <div className="flex h-full flex-col overflow-hidden rounded-lg border-x border-b border-[#217346] bg-[#e6e6e6]">
        <TitleBar />
        <TabStrip />
        <Ribbon />
        <FormulaBar />
        <main className="flex min-h-0 flex-1">
          <Sheet />
          <VerticalScroll />
        </main>
        <SheetTabs />
        <StatusBar />
      </div>
    </div>
  );
}
